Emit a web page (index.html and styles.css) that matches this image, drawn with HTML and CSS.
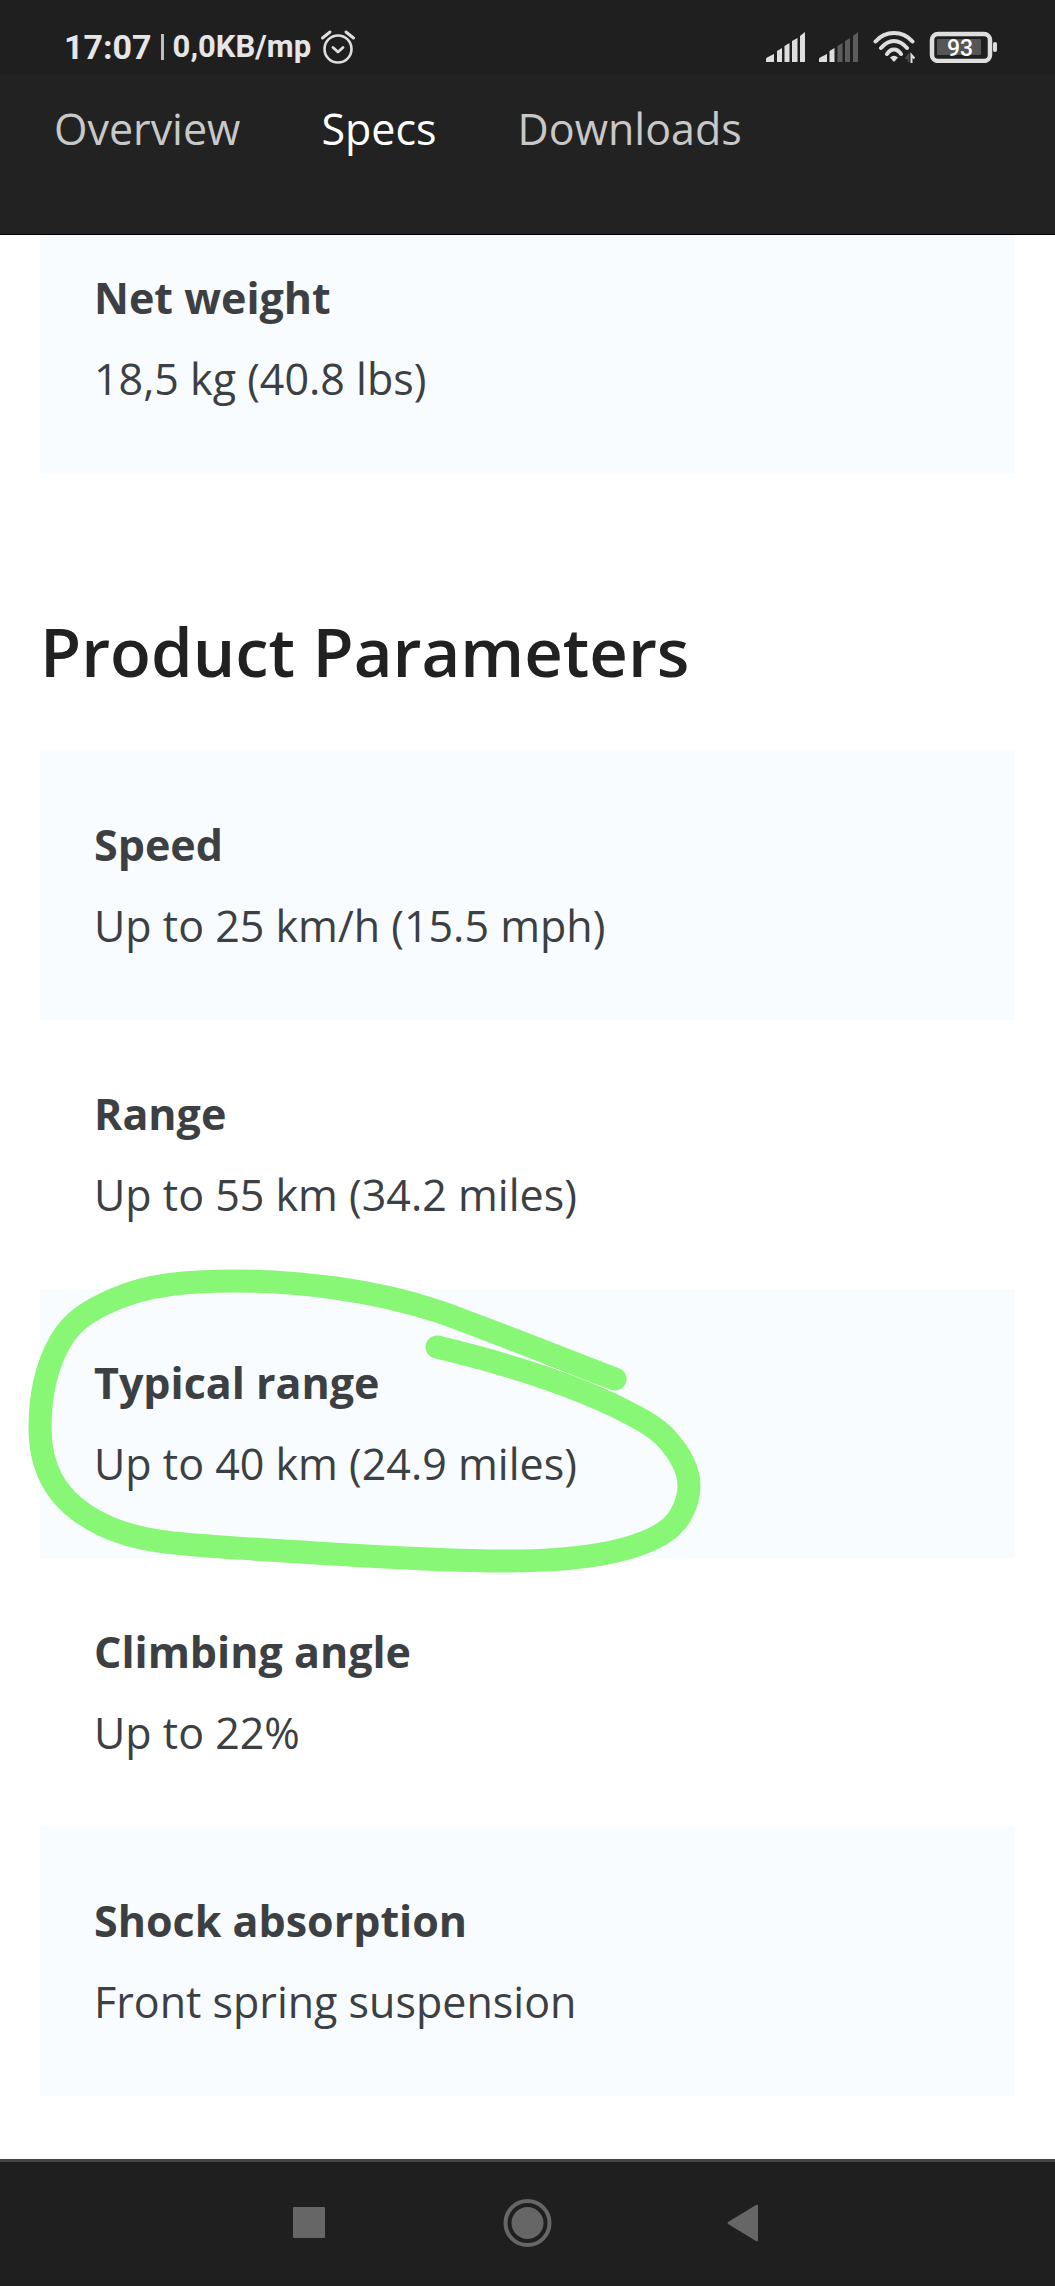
FILE: index.html
```html
<!DOCTYPE html>
<html lang="en">
<head>
    <meta charset="UTF-8">
    <meta name="viewport" content="width=device-width, initial-scale=1.0">
    <title>Specs</title>
    <link rel="stylesheet" href="styles.css">
</head>
<body>
    <header class="top">
        <div class="status-bar">
            <div class="status-left">
                <span class="clock">17:07</span>
                <span class="divider"></span>
                <span class="net-speed">0,0KB/mp</span>
                <svg class="icon" width="36" height="36" viewBox="0 0 36 36" fill="none" stroke="#dedede" stroke-linecap="round">
                    <circle cx="18" cy="20" r="13.5" stroke-width="2.6"/>
                    <path d="M13 18.5l5 4.5 5-4.5" stroke-width="2.8" stroke-linejoin="round"/>
                    <path d="M2.5 9L10 3M26 3l7.500 6" stroke-width="3"/>
                </svg>
            </div>
            <div class="status-right">
                <svg class="icon" width="40" height="32" viewBox="0 0 40 32" fill="#dedede">
                    <path d="M1 31v-3q0-1 1-1.500L9 23v8zM12 31V20l5-3v14zM19.500 31V15l5-3v19zM27 31V10l5.500-3v24zM35 31V5l5-4v30z"/>
                </svg>
                <svg class="icon" width="40" height="32" viewBox="0 0 40 32" fill="#dedede">
                    <path d="M0 31v-3q0-1 1-1.500L8 23v8zM10.500 31V20l5-3v14z"/>
                    <path fill="#5c5c5c" d="M18.500 31V15l5-3v19zM26 31V10l5-3v24zM34 31V5l5-4v30z"/>
                </svg>
                <svg class="icon" width="42" height="34" viewBox="0 0 42 34" fill="none" stroke="#dedede" stroke-width="4" stroke-linecap="round">
                    <path d="M2.500 11.500Q10 3 21 3t18.500 8.500M8 18Q14 11 21 11t13 7M14 24Q17 19.500 21 19.500T28 24"/>
                    <path d="M17 27.500Q21 24 25 27.500L22 31q-1 1-2 0z" fill="#dedede" stroke="none"/>
                    <path d="M35.500 32v-7l-3 4" stroke="#4a4a4a" stroke-width="2" stroke-linecap="butt"/>
                    <path d="M38.500 33v-8l3 3.500" stroke-width="2" stroke-linecap="butt"/>
                </svg>
                <svg class="icon" width="68" height="32" viewBox="0 0 68 32">
                    <rect x="3" y="3" width="58" height="27" rx="6" fill="none" stroke="#dedede" stroke-width="4.500"/>
                    <rect x="8" y="8" width="44" height="16" rx="1" fill="#565656"/>
                    <rect x="64" y="11" width="4" height="10" rx="2" fill="#dedede"/>
                    <text class="battery-level" x="31" y="25" text-anchor="middle">93</text>
                </svg>
            </div>
        </div>
        <nav class="tabs">
            <a href="#overview">Overview</a>
            <a href="#specs" class="active">Specs</a>
            <a href="#downloads">Downloads</a>
        </nav>
    </header>

    <main class="content" id="specs">
        <dl class="spec-list">
            <div class="spec">
                <dt>Net weight</dt>
                <dd>18,5 kg (40.8 lbs)</dd>
            </div>
        </dl>

        <h2>Product Parameters</h2>
        <dl class="spec-list">
            <div class="spec">
                <dt>Speed</dt>
                <dd>Up to 25 km/h (15.5 mph)</dd>
            </div>
            <div class="spec">
                <dt>Range</dt>
                <dd>Up to 55 km (34.2 miles)</dd>
            </div>
            <div class="spec marked">
                <dt>Typical range</dt>
                <dd>Up to 40 km (24.9 miles)
                    <svg class="marker" width="700" height="320" viewBox="0 0 700 320" aria-hidden="true">
                        <path d="M595 119C540 98 460 66 420 52C355 30 280 21 213 21C165 21 128 25 95 39C72 49 52 60 40 82C27 105 20 135 20 168C20 188 24 205 32 220C43 240 62 255 83 265C120 283 160 284 247 290C320 294 400 301 487 301C550 301 604 295 640 275C648 270 655 265 660 256C666 246 669 236 669 226C669 208 659 192 645 177C632 164 613 155 593 145C540 120 480 102 417 87"/>
                    </svg>
                </dd>
            </div>
            <div class="spec">
                <dt>Climbing angle</dt>
                <dd>Up to 22%</dd>
            </div>
            <div class="spec">
                <dt>Shock absorption</dt>
                <dd>Front spring suspension</dd>
            </div>
        </dl>
    </main>

    <div class="system-nav">
        <button type="button" aria-label="Recent apps">
            <svg width="49" height="48" viewBox="0 0 49 48"><rect x="7" y="8" width="32" height="31" rx="1"/></svg>
        </button>
        <button type="button" aria-label="Home">
            <svg width="49" height="48" viewBox="0 0 49 48">
                <circle cx="24.500" cy="24" r="16"/>
                <circle cx="24.500" cy="24" r="22" fill="none" stroke="#666" stroke-width="4"/>
            </svg>
        </button>
        <button type="button" aria-label="Back">
            <svg width="49" height="48" viewBox="0 0 49 48"><path d="M8 23L36 6q2-1 2 1v34q0 2-2 1L8 25q-1-1 0-2z"/></svg>
        </button>
    </div>
</body>
</html>
```
FILE: styles.css
```css
:root {
    --bar: #1f1f1f;
    --header: #222222;
    --status: #e6e6e6;
    --text: #3c4043;
    --tint: #f8fcff;
    --marker: #87f775;
}

* {
    box-sizing: border-box;
    margin: 0;
    padding: 0;
}

body {
    display: flex;
    flex-direction: column;
    min-height: 100vh;
    background: #fff;
    color: var(--text);
    font-family: "Open Sans", "Noto Sans", sans-serif;
    font-size: 43px;
    line-height: 58px;
}

.top {
    position: sticky;
    top: 0;
    z-index: 2;
    background: var(--header);
    border-bottom: 1px solid #000;
}

.status-bar {
    display: flex;
    justify-content: space-between;
    align-items: center;
    height: 75px;
    padding: 19px 58px 0 64px;
    background: var(--bar);
    color: var(--status);
    font-family: Roboto, sans-serif;
    font-weight: 700;
    line-height: 40px;
}

.status-left {
    display: flex;
    align-items: center;
    gap: 9px;
}

.status-right {
    display: flex;
    align-items: center;
    gap: 14px;
}

.icon {
    display: block;
}

.clock {
    font-size: 34px;
}

.divider {
    width: 3px;
    height: 26px;
    background: #bdbdbd;
}

.net-speed {
    font-size: 31px;
}

.battery-level {
    fill: #fff;
    font-size: 23px;
    font-weight: 500;
}

.tabs {
    display: flex;
    gap: 81px;
    padding: 25px 54px 76px;
}

.tabs a {
    color: #c8c8c8;
    text-decoration: none;
}

.tabs .active {
    color: #fff;
}

/* the first row is partly scrolled under the header */
.content {
    flex: 1;
    margin-top: -31px;
    padding: 0 40px 63px;
}

h2 {
    margin: 133px 0 55px;
    color: #212121;
    font-size: 67px;
    font-weight: 600;
    line-height: 90px;
}

.spec {
    padding: 65px 54px;
}

.spec:nth-child(odd) {
    background: var(--tint);
}

.spec dt {
    margin-bottom: 23px;
    font-weight: 700;
}

.marked {
    position: relative;
}

.marker {
    position: absolute;
    top: -29px;
    left: -20px;
    z-index: 1;
    fill: none;
    stroke: var(--marker);
    stroke-width: 23;
    stroke-linecap: round;
    stroke-linejoin: round;
    pointer-events: none;
}

.system-nav {
    display: flex;
    justify-content: center;
    gap: 168px;
    padding: 37px 0 39px;
    background: var(--bar);
    border-top: 3px solid #444;
}

.system-nav button {
    border: none;
    background: none;
    cursor: pointer;
}

.system-nav svg {
    display: block;
    fill: #666;
}
```
